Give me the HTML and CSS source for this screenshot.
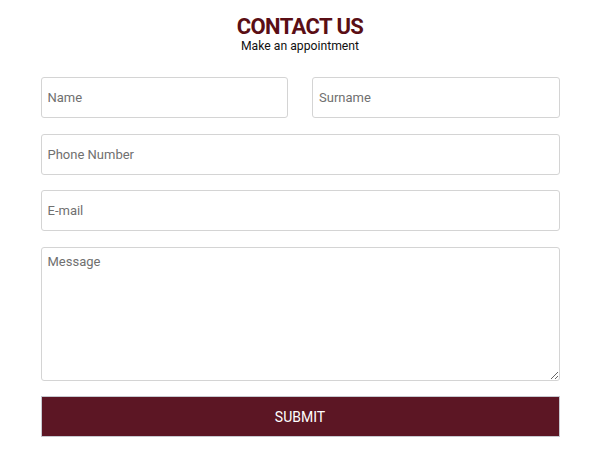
FILE: index.html
```html
<!DOCTYPE html>
<html lang="en">
<head>
    <meta charset="UTF-8">
    <meta name="viewport" content="width=device-width, initial-scale=1.0">
    <title>Contact Us</title>
    <link rel="stylesheet" href="styles.css">
</head>
<body>
    <div class="contact">
        <h1>CONTACT US</h1>
        <p class="subtitle">Make an appointment</p>

        <form class="form">
            <div class="row two">
                <input type="text" class="field" placeholder="Name">
                <input type="text" class="field" placeholder="Surname">
            </div>
            <div class="row">
                <input type="tel" class="field" placeholder="Phone Number">
            </div>
            <div class="row">
                <input type="email" class="field" placeholder="E-mail">
            </div>
            <div class="row">
                <textarea class="field message" placeholder="Message"></textarea>
            </div>
            <button type="button" class="submit">SUBMIT</button>
        </form>
    </div>
</body>
</html>
```

FILE: styles.css
```css
body {
    margin: 0;
    background: #fff;
    font-family: Roboto, 'Liberation Sans', sans-serif;
}
.contact {
    width: 519px;
    margin: 0 auto;
    padding-top: 15px;
}
h1 {
    margin: 0;
    text-align: center;
    color: #5a0e15;
    font-size: 22px;
    font-weight: 700;
    line-height: 24px;
    letter-spacing: -0.6px;
}
.subtitle {
    margin: 0;
    text-align: center;
    font-size: 12.2px;
    line-height: 15px;
    color: #111;
}
.form {
    margin-top: 23px;
}
.row {
    display: flex;
    gap: 24px;
    margin-bottom: 15.5px;
}
.field {
    flex: 1;
    min-width: 0;
    box-sizing: border-box;
    height: 41px;
    padding: 0 6px;
    border: 1px solid #d4d4d4;
    border-radius: 3px;
    font-family: Roboto, 'Liberation Sans', sans-serif;
    font-size: 13px;
    color: #333;
    background: #fff;
}
.field::placeholder {
    color: #707070;
}
.message {
    height: 134px;
    padding-top: 6px;
    resize: vertical;
}
.submit {
    display: block;
    width: 100%;
    height: 41px;
    border: 1px solid #c7c9d0;
    background: #5c1624;
    color: #fff;
    font-family: Roboto, 'Liberation Sans', sans-serif;
    font-size: 14px;
    cursor: pointer;
}
```
